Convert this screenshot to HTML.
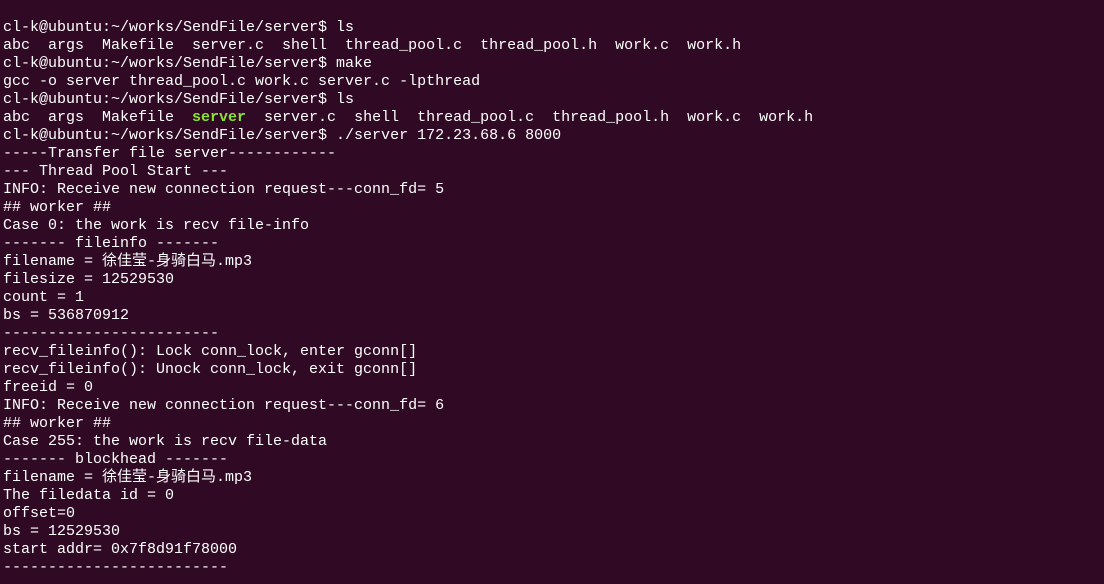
<!DOCTYPE html>
<html><head><style>
html,body{margin:0;padding:0;background:#300a24;width:1104px;height:584px;overflow:hidden}
pre{margin:0;position:absolute;left:3px;top:19px;font-family:"Liberation Mono","Noto Sans CJK SC",monospace;font-size:15px;line-height:18px;color:#ffffff;}
b{color:#8ae234}
</style></head><body><pre>cl-k@ubuntu:~/works/SendFile/server$ ls
abc  args  Makefile  server.c  shell  thread_pool.c  thread_pool.h  work.c  work.h
cl-k@ubuntu:~/works/SendFile/server$ make
gcc -o server thread_pool.c work.c server.c -lpthread
cl-k@ubuntu:~/works/SendFile/server$ ls
abc  args  Makefile  <b>server</b>  server.c  shell  thread_pool.c  thread_pool.h  work.c  work.h
cl-k@ubuntu:~/works/SendFile/server$ ./server 172.23.68.6 8000
-----Transfer file server------------
--- Thread Pool Start ---
INFO: Receive new connection request---conn_fd= 5
## worker ##
Case 0: the work is recv file-info
------- fileinfo -------
filename = 徐佳莹-身骑白马.mp3
filesize = 12529530
count = 1
bs = 536870912
------------------------
recv_fileinfo(): Lock conn_lock, enter gconn[]
recv_fileinfo(): Unock conn_lock, exit gconn[]
freeid = 0
INFO: Receive new connection request---conn_fd= 6
## worker ##
Case 255: the work is recv file-data
------- blockhead -------
filename = 徐佳莹-身骑白马.mp3
The filedata id = 0
offset=0
bs = 12529530
start addr= 0x7f8d91f78000
-------------------------</pre></body></html>
